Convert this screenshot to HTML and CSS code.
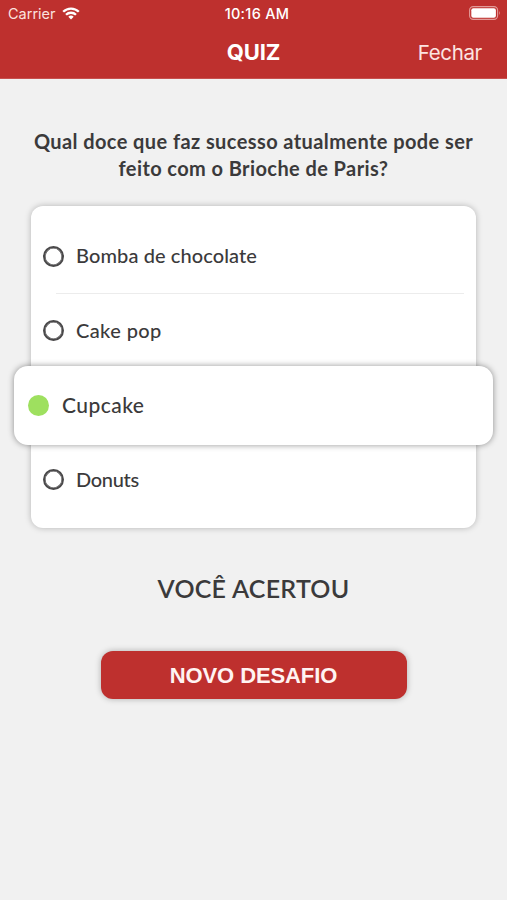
FILE: index.html
```html
<!DOCTYPE html>
<html lang="pt-BR">
<head>
<meta charset="utf-8">
<title>Quiz</title>
<link rel="stylesheet" href="styles.css">
</head>
<body>
<header class="header">
  <div class="status">
    <div class="carrier"><span>Carrier</span>
      <svg class="wifi" width="18" height="13" viewBox="0 0 18 13" fill="none" stroke="#fff" stroke-width="2.3"><path d="M1.2 4.8a11 11 0 0 1 15.6 0M4 7.8a7.1 7.1 0 0 1 10 0"/><path d="M9 12.5 6.3 9.8a3.8 3.8 0 0 1 5.4 0Z" fill="#fff" stroke="none"/></svg>
    </div>
    <span class="time">10:16 AM</span>
    <svg class="battery" width="32" height="14" viewBox="0 0 32 14"><rect x=".6" y=".6" width="28" height="12.8" rx="3.6" fill="none" stroke="#e29a98" stroke-width="1.1"/><rect x="2.3" y="2.3" width="24.6" height="9.4" rx="2" fill="#fff"/><path d="M30 4.8q1.6 2.2 0 4.4Z" fill="#e29a98"/></svg>
  </div>
  <nav class="nav">
    <h1 class="title">QUIZ</h1>
    <a class="close">Fechar</a>
  </nav>
</header>
<main class="main">
  <h2 class="question">Qual doce que faz sucesso atualmente pode ser<br>feito com o Brioche de Paris?</h2>
  <ul class="options">
    <li class="option divided"><i class="radio"></i><span class="label">Bomba de chocolate</span></li>
    <li class="option"><i class="radio"></i><span class="label spaced">Cake pop</span></li>
    <li class="option selected"><i class="radio"></i><span class="label">Cupcake</span></li>
    <li class="option"><i class="radio"></i><span class="label tight">Donuts</span></li>
  </ul>
  <p class="result">VOCÊ ACERTOU</p>
  <button class="button">NOVO DESAFIO</button>
</main>
</body>
</html>
```
FILE: styles.css
```css
* { box-sizing: border-box; }
body {
  margin: 0;
  height: 900px;
  overflow: hidden;
  background: #f1f1f1;
  color: #3b3a3b;
  font-family: Lato, "Open Sans", sans-serif;
}
.header {
  height: 79px;
  background: #be302e;
  border-bottom: 1px solid #c7504e;
  color: #fff;
  font-family: Inter, "Liberation Sans", sans-serif;
}
.status {
  display: grid;
  grid-template-columns: 1fr auto 1fr;
  align-items: center;
  height: 27px;
  padding: 0 6px 0 8px;
  font-size: 14.5px;
}
.carrier { display: flex; align-items: center; gap: 6px; color: #fbe2df; }
.wifi { margin-top: -1px; }
.time { font-weight: 500; font-size: 14.5px; letter-spacing: .3px; padding-left: 5px; }
.battery { justify-self: end; margin-top: -1px; }
.nav {
  display: grid;
  grid-template-columns: 1fr auto 1fr;
  align-items: center;
  height: 50px;
  padding: 0 25px;
}
.title { grid-column: 2; margin: 0; font-size: 22px; font-weight: 700; letter-spacing: -.1px; }
.close { justify-self: end; font-size: 20.5px; letter-spacing: -.35px; color: #fce4e1; padding-top: 1px; }
.main { display: flex; flex-direction: column; align-items: center; }
.question {
  margin: 49px 0 0;
  font-size: 20px;
  line-height: 27px;
  font-weight: 700;
  letter-spacing: .41px;
  text-align: center;
  white-space: nowrap;
}
.options {
  width: 445px;
  height: 322px;
  margin: 24px 0 0;
  padding: 13px 0 0;
  list-style: none;
  background: #fff;
  border-radius: 12px;
  box-shadow: 0 0 6px rgba(0, 0, 0, .26);
}
.option {
  position: relative;
  display: flex;
  align-items: center;
  gap: 12px;
  height: 74.5px;
  padding-left: 12px;
  font-size: 20px;
  font-weight: 500;
  white-space: nowrap;
}
.label { letter-spacing: .1px; margin-top: -2px; }
.spaced { letter-spacing: .4px; }
.tight { letter-spacing: -.3px; }
.divided::after {
  content: "";
  position: absolute;
  left: 25px;
  right: 12px;
  bottom: 0;
  height: 1px;
  background: #ececec;
}
.radio {
  width: 21px;
  height: 21px;
  border: 2px solid #4a494a;
  border-radius: 50%;
  box-shadow: inset 0 0 0 .6px #4a494a;
}
.selected {
  height: 79px;
  margin: -2.5px -17px -2px;
  padding-left: 14px;
  gap: 13px;
  background: #fff;
  border-radius: 14px;
  box-shadow: 0 0 6px rgba(0, 0, 0, .42);
}
.selected .radio { border: 0; background: #9ee05f; box-shadow: none; }
.selected .label { font-size: 21px; letter-spacing: .45px; }
.result {
  margin: 45px 0 0;
  font-size: 25px;
  line-height: 30px;
  font-weight: 600;
  letter-spacing: .25px;
}
.button {
  width: 306px;
  height: 48px;
  margin-top: 48px;
  padding: 2px 0 0;
  border: 0;
  border-radius: 12px;
  background: #be302e;
  box-shadow: 0 0 6px rgba(0, 0, 0, .28);
  color: #fff3f2;
  font: 700 22px "Liberation Sans", Arial, sans-serif;
  letter-spacing: -.1px;
}
```
